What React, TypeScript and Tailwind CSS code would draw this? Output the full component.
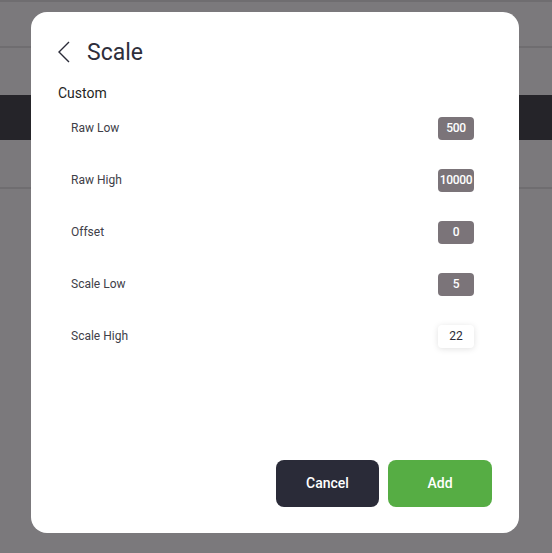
import React from 'react'

interface Field {
  label: string
  value: string
  active?: boolean
}

const fields: Field[] = [
  {label: 'Raw Low', value: '500'},
  {label: 'Raw High', value: '10000'},
  {label: 'Offset', value: '0'},
  {label: 'Scale Low', value: '5'},
  {label: 'Scale High', value: '22', active: true},
]

const ValueBadge: React.FC<{field: Field}> = ({field}) => {
  if (field.active) {
    return <div className="flex items-center justify-center w-[36px] h-[23px] rounded-[4px] bg-white text-[12px] text-[#2a2b38] shadow-[0_1px_6px_rgba(0,0,0,0.12)]">{field.value}</div>
  }
  return <div className="flex items-center justify-center w-[36px] h-[23px] rounded-[4px] bg-[#7b7479] text-[12px] font-medium text-white tracking-[-0.3px]">{field.value}</div>
}

export default function App() {
  return (
    <div className="relative w-[552px] h-[553px] overflow-hidden bg-[#7b797c]" style={{fontFamily: 'Roboto, "Open Sans", sans-serif'}}>
      {/* page underneath the overlay */}
      <div className="flex flex-col">
        <div className="h-[2px] bg-[#6f6d70]"></div>
        <div className="h-[44px]"></div>
        <div className="h-[2px] bg-[#6f6d70]"></div>
        <div className="h-[47px]"></div>
        <div className="h-[45px] bg-[#252429]"></div>
        <div className="h-[47px]"></div>
        <div className="h-[2px] bg-[#6f6d70]"></div>
      </div>

      {/* dialog */}
      <div className="absolute left-[31px] top-[12px] w-[488px] h-[521px] rounded-[16px] bg-white flex flex-col pl-[26px] pr-[27px] pb-[26px]">
        <div className="flex items-center h-[24px] mt-[28px]">
          <svg width="14" height="22" viewBox="0 0 14 22" fill="none">
            <polyline points="12,1 2,11 12,21" stroke="#2a2b38" strokeWidth="1.4" strokeLinejoin="miter" />
          </svg>
          <span className="ml-[16px] text-[23px] leading-none text-[#2e2f3b]">Scale</span>
        </div>

        <div className="mt-[21px] ml-[1px] text-[14px] leading-[16px] text-[#1f1f24]">Custom</div>

        <div className="flex flex-col mt-[1px] pl-[14px] pr-[18px]">
          {fields.map((f, i) => (
            <div key={i} className="flex items-center justify-between h-[52px]">
              <span className="text-[12px] text-[#404048]">{f.label}</span>
              <ValueBadge field={f} />
            </div>
          ))}
        </div>

        <div className="mt-auto flex justify-end gap-[9px]">
          <button className="w-[103px] h-[47px] rounded-[8px] bg-[#2a2b38] text-white text-[14px] font-medium">Cancel</button>
          <button className="w-[104px] h-[47px] rounded-[8px] bg-[#56ad44] text-white text-[14px] font-medium">Add</button>
        </div>
      </div>
    </div>
  )
}
